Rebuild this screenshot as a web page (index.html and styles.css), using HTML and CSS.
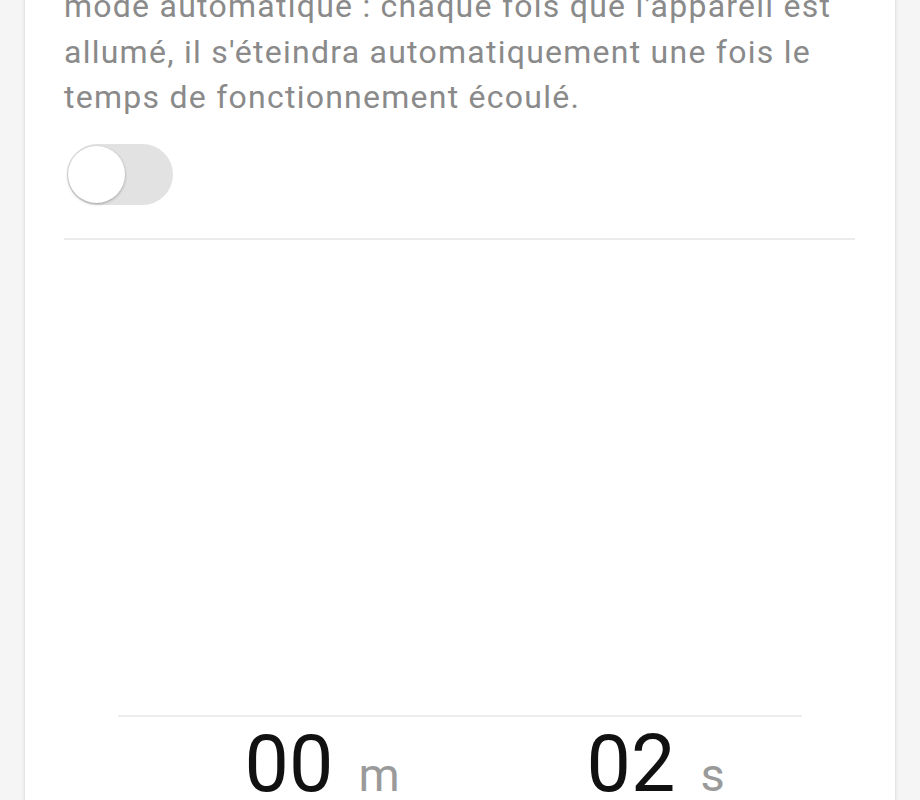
FILE: index.html
```html
<!DOCTYPE html>
<html lang="fr">
<head>
<meta charset="utf-8">
<title>Minuterie</title>
<link rel="stylesheet" href="styles.css">
</head>
<body>
  <main class="card">
    <section class="auto-mode">
      <p class="desc">mode automatique : chaque fois que l'appareil est<br>allumé, il s'éteindra automatiquement une fois le<br>temps de fonctionnement écoulé.</p>
      <div class="switch" role="switch" aria-checked="false"><span class="knob"></span></div>
    </section>
    <div class="spacer"></div>
    <section class="picker">
      <div class="col">
        <span></span>
        <span class="num">00</span>
        <span class="unit">m</span>
      </div>
      <div class="col">
        <span></span>
        <span class="num">02</span>
        <span class="unit">s</span>
      </div>
    </section>
  </main>
</body>
</html>
```
FILE: styles.css
```css
html, body {
  margin: 0;
  padding: 0;
  height: 100%;
  overflow: hidden;
}
body {
  background: #f5f5f5;
  font-family: Roboto, "Noto Sans", sans-serif;
}
.card {
  margin: 0 24px 0 24px;
  background: #ffffff;
  border-left: 1px solid #e4e4e4;
  border-right: 1px solid #e4e4e4;
  box-shadow: 0 0 4px rgba(0,0,0,0.07);
  padding: 0 40px 0 39px;
  min-height: 900px;
}
.auto-mode {
  border-bottom: 2px solid #ececec;
  padding-bottom: 33px;
}
.desc {
  margin: -16px 0 0 0;
  font-size: 32px;
  line-height: 45.5px;
  letter-spacing: 1.25px;
  white-space: nowrap;
  color: #8a8a8a;
}
.switch {
  margin: 23px 0 0 3px;
  width: 106px;
  height: 61px;
  border-radius: 31px;
  background: #e2e2e2;
  display: flex;
  align-items: center;
  padding-left: 1px;
  box-sizing: border-box;
}
.knob {
  width: 57px;
  height: 57px;
  border-radius: 50%;
  background: #ffffff;
  box-shadow: 0 1px 3px rgba(0,0,0,0.3);
}
.spacer {
  height: 475px;
}
.picker {
  margin: 0 53px 0 54px;
  border-top: 2px solid #ececec;
  display: grid;
  grid-template-columns: 1fr 1fr;
}
.col {
  display: grid;
  grid-template-columns: 1fr auto 1fr;
  align-items: baseline;
  padding-top: 8px;
}
.num {
  font-size: 79px;
  line-height: 79px;
  color: #111111;
}
.unit {
  font-size: 47px;
  line-height: 79px;
  color: #9a9a9a;
  margin-left: 25px;
}
```
